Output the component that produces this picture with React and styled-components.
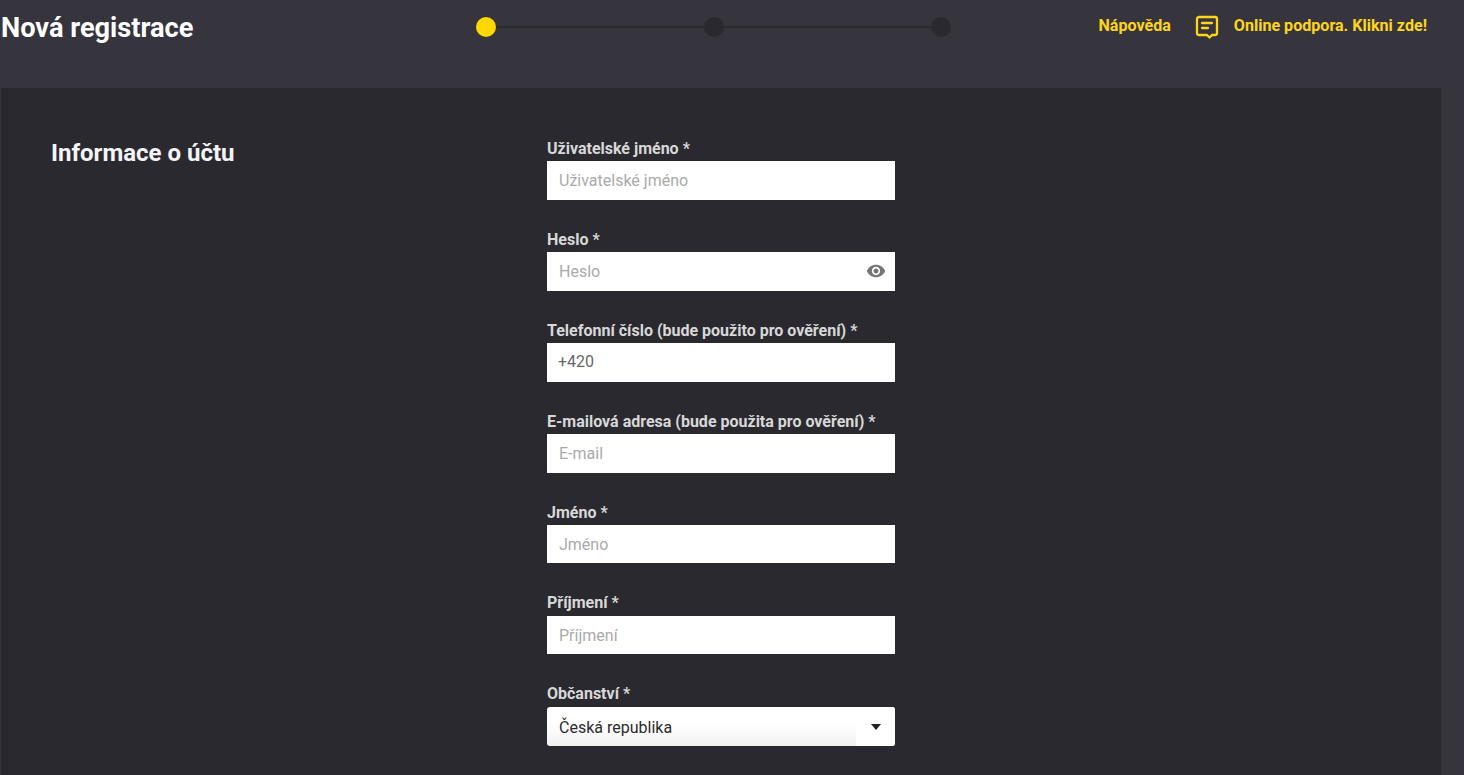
import React from "react";
import styled, { createGlobalStyle } from "styled-components";

const Global = createGlobalStyle`
  html, body { margin: 0; padding: 0; height: 100%; overflow: hidden; background: #36353e; }
  body { font-family: Roboto, "Liberation Sans", sans-serif; }
  * { box-sizing: border-box; }
`;

const Page = styled.div`
  width: 1464px;
  height: 775px;
  overflow: hidden;
  background: #36353e;
`;

const Header = styled.header`
  height: 88px;
  display: flex;
  align-items: flex-start;
  padding: 12px 37px 0 1px;
`;

const Title = styled.h1`
  width: 475px;
  margin: 1px 0 0;
  font-size: 27.2px;
  line-height: 31px;
  font-weight: 700;
  color: #fff;
`;

const Stepper = styled.div`
  width: 475px;
  height: 20px;
  margin-top: 5px;
  display: flex;
  align-items: center;
`;

const Dot = styled.span`
  flex: none;
  width: 20px;
  height: 20px;
  border-radius: 50%;
  background: ${(p) => (p.$active ? "#ffd800" : "#2a292f")};
`;

const Line = styled.span`
  flex: 1;
  height: 2px;
  background: #2a292f;
`;

const HeaderLinks = styled.nav`
  margin-left: auto;
  height: 26px;
  display: flex;
  align-items: center;
  color: #fed51a;
  font-size: 16.08px;
  font-weight: 700;
`;

const HelpLink = styled.span`
  margin-right: 24px;
`;

const ChatIcon = styled.svg`
  width: 24px;
  height: 24px;
  margin-right: 15px;
  margin-top: 4px;
`;

const Panel = styled.main`
  width: 1440px;
  height: 687px;
  margin-left: 1px;
  padding: 47px 50px 0;
  background: #2a292f;
  display: grid;
  grid-template-columns: 496px 348px;
  align-content: start;
`;

const SectionTitle = styled.h2`
  margin: 4px 0 0;
  font-size: 24px;
  line-height: 28px;
  font-weight: 700;
  color: #f4f4f6;
`;

const Form = styled.div`
  display: flex;
  flex-direction: column;
  gap: 26px;
`;

const Field = styled.div`
  display: flex;
  flex-direction: column;
`;

const Label = styled.label`
  height: 26.3px;
  font-size: 16px;
  line-height: 28px;
  font-weight: 700;
  color: #d8d8d8;
`;

const InputBox = styled.div`
  position: relative;
  height: 38.6px;
  background: #fff;
`;

const Input = styled.input`
  width: 100%;
  height: 100%;
  border: 0;
  outline: 0;
  padding: 0 40px 0 12px;
  background: transparent;
  font: 400 16px Roboto, sans-serif;
  color: #666;
  &::placeholder { color: #aaa; opacity: 1; }
`;

const PhoneInput = styled(Input)`
  padding-left: 11px;
  padding-bottom: 2px;
`;

const Eye = styled.svg`
  position: absolute;
  right: 9px;
  top: 9px;
  width: 20px;
  height: 20px;
  fill: #757575;
`;

const Select = styled.div`
  height: 38.6px;
  margin-top: 0.6px;
  display: flex;
  border-radius: 3px;
  overflow: hidden;
  background: linear-gradient(#fff 45%, #f1f1f1);
  color: #2b2b2b;
  font-size: 16px;
`;

const SelectValue = styled.span`
  flex: 1;
  padding-left: 12px;
  line-height: 41px;
`;

const SelectArrow = styled.span`
  width: 39px;
  display: flex;
  align-items: center;
  justify-content: center;
  background: #fff;
  &::after {
    content: "";
    border-left: 5.5px solid transparent;
    border-right: 5.5px solid transparent;
    border-top: 6px solid #222;
  }
`;

const fields = [
  ["Uživatelské jméno *", "Uživatelské jméno"],
  ["Heslo *", "Heslo", true],
  ["Telefonní číslo (bude použito pro ověření) *", null],
  ["E-mailová adresa (bude použita pro ověření) *", "E-mail"],
  ["Jméno *", "Jméno"],
  ["Příjmení *", "Příjmení"],
];

export default function App() {
  return (
    <Page>
      <Global />
      <Header>
        <Title>Nová registrace</Title>
        <Stepper>
          <Dot $active />
          <Line />
          <Dot />
          <Line />
          <Dot />
        </Stepper>
        <HeaderLinks>
          <HelpLink>Nápověda</HelpLink>
          <ChatIcon viewBox="0 0 24 24" fill="none" stroke="#fed51a" strokeWidth="2.300" strokeLinejoin="round" strokeLinecap="round">
            <path d="M4 2h16a2 2 0 0 1 2 2v14a2 2 0 0 1-2 2h-3l-2.500 2.500L12 20H4a2 2 0 0 1-2-2V4a2 2 0 0 1 2-2z" />
            <path d="M7 8h10M7 13h6" />
          </ChatIcon>
          <span>Online podpora. Klikni zde!</span>
        </HeaderLinks>
      </Header>
      <Panel>
        <SectionTitle>Informace o účtu</SectionTitle>
        <Form>
          {fields.map(([label, placeholder, eye]) => (
            <Field key={label}>
              <Label>{label}</Label>
              <InputBox>
                {placeholder ? (
                  <Input placeholder={placeholder} readOnly />
                ) : (
                  <PhoneInput defaultValue="+420" />
                )}
                {eye && (
                  <Eye viewBox="0 0 24 24">
                    <path d="M12 4.500C7 4.500 2.730 7.610 1 12c1.730 4.390 6 7.500 11 7.500s9.270-3.110 11-7.500c-1.730-4.390-6-7.500-11-7.500zM12 17c-2.760 0-5-2.240-5-5s2.240-5 5-5 5 2.240 5 5-2.240 5-5 5zm0-8c-1.660 0-3 1.340-3 3s1.340 3 3 3 3-1.340 3-3-1.340-3-3-3z" />
                  </Eye>
                )}
              </InputBox>
            </Field>
          ))}
          <Field>
            <Label>Občanství *</Label>
            <Select>
              <SelectValue>Česká republika</SelectValue>
              <SelectArrow />
            </Select>
          </Field>
        </Form>
      </Panel>
    </Page>
  );
}
